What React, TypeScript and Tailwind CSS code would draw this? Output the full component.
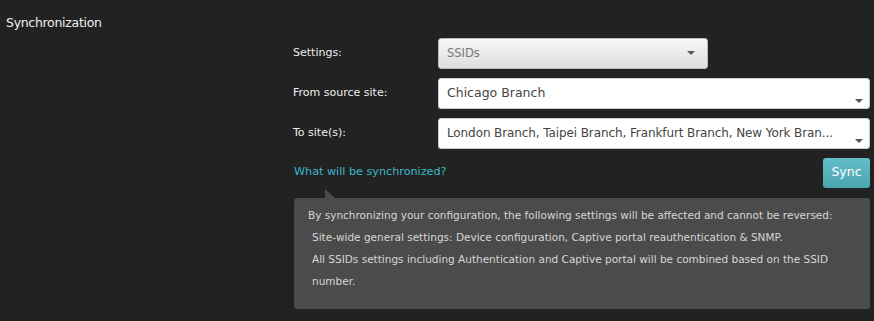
const font = { fontFamily: '"DejaVu Sans", "Liberation Sans", sans-serif' };

function Caret() {
  return <span className="block h-0 w-0 border-x-[4px] border-t-[4px] border-x-transparent border-t-[#555]" />;
}

function Field({ label, children }: { label: string; children: React.ReactNode }) {
  return (
    <div className="flex items-center">
      <div className="w-[145px] text-[11px] text-[#eeeeee]">{label}</div>
      {children}
    </div>
  );
}

export default function App() {
  return (
    <div className="h-[321px] w-[874px] overflow-hidden bg-[#222222]" style={font}>
      <div className="px-[6px] pt-[14px] text-[12.5px] tracking-[-0.3px] text-[#f0f0f0]">Synchronization</div>
      <div className="ml-[293px] mr-[4px] mt-[5px] flex flex-col gap-[9px]">
        <Field label="Settings:">
          <div className="flex h-[31px] w-[270px] items-center justify-between rounded-[3px] border border-[#bbb] bg-gradient-to-b from-[#f7f7f7] to-[#dedede] pl-[8px] pr-[12px] text-[11.5px] text-[#777]">
            <span>SSIDs</span>
            <Caret />
          </div>
        </Field>
        <Field label="From source site:">
          <div className="relative flex h-[31px] flex-1 items-center rounded-[3px] border border-[#ccc] bg-white pl-[8px] text-[12.5px] text-[#444]">
            <span>Chicago Branch</span>
            <span className="absolute bottom-[5px] right-[6px]"><Caret /></span>
          </div>
        </Field>
        <Field label="To site(s):">
          <div className="relative flex h-[31px] flex-1 items-center rounded-[3px] border border-[#ccc] bg-white pl-[8px] text-[12px] text-[#444]">
            <span className="tracking-[-0.1px]">London Branch, Taipei Branch, Frankfurt Branch, New York Bran...</span>
            <span className="absolute bottom-[5px] right-[6px]"><Caret /></span>
          </div>
        </Field>
        <div className="flex items-center justify-between">
          <span className="pl-[1px] text-[11.2px] text-[#3cb8c9]">What will be synchronized?</span>
          <button className="h-[30px] w-[47px] rounded-[3px] bg-gradient-to-b from-[#62bfc9] to-[#4aa3ae] text-[12.5px] text-white">
            Sync
          </button>
        </div>
        <div className="relative ml-[1px] mt-[1px] rounded-[3px] bg-[#4b4b4b] px-[14px] pb-[17px] pt-[6px] text-[10.5px] leading-[22px] text-[#d6d6d6]">
          <span className="absolute left-[31px] top-[-9px] h-0 w-0 border-b-[9px] border-r-[10px] border-b-[#4b4b4b] border-r-transparent" />
          <div>By synchronizing your configuration, the following settings will be affected and cannot be reversed:</div>
          <div className="pl-[4px]">Site-wide general settings: Device configuration, Captive portal reauthentication &amp; SNMP.</div>
          <div className="pl-[4px]">All SSIDs settings including Authentication and Captive portal will be combined based on the SSID number.</div>
        </div>
      </div>
    </div>
  );
}
